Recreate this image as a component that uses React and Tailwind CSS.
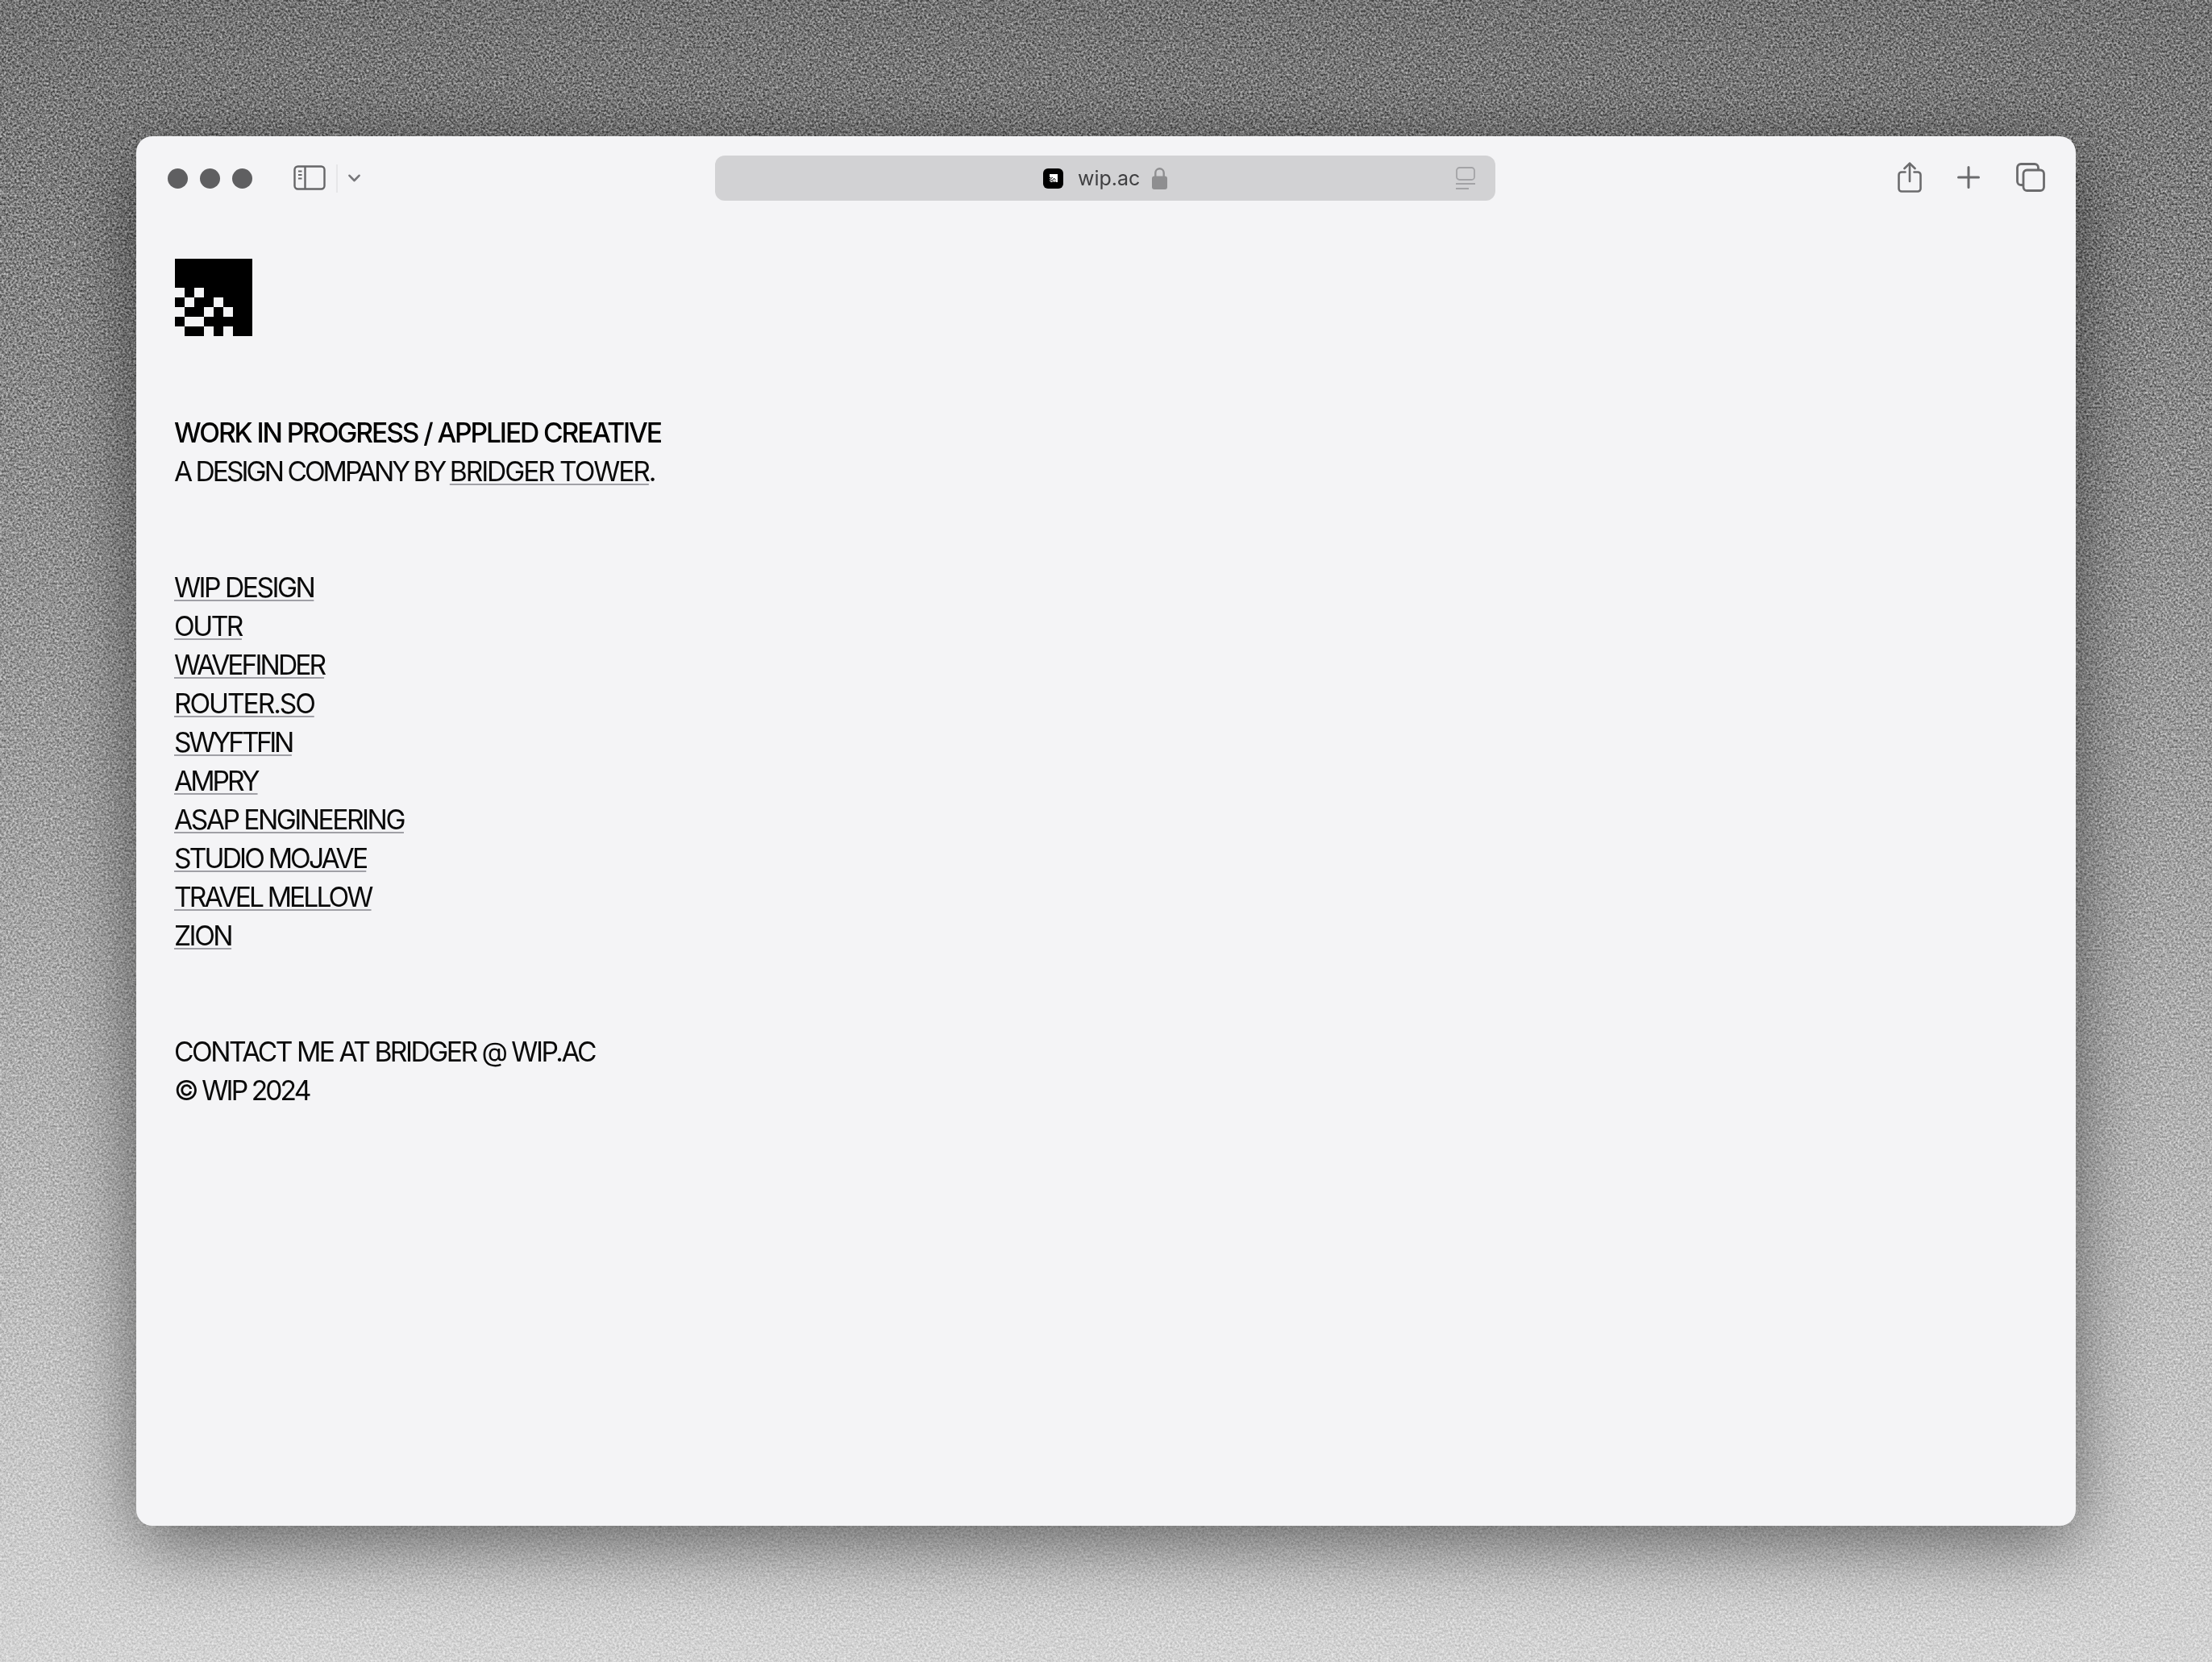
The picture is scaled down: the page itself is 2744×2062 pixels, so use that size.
const WHITE = [
  [0, 3], [2, 3],
  [1, 4], [4, 4],
  [0, 5], [3, 5], [5, 5],
  [1, 6], [2, 6],
  [0, 7], [3, 7], [5, 7],
];

function Logo({ size, bg, fg, crisp = true }) {
  return (
    <svg width={size} height={size} viewBox="0 0 8 8" shapeRendering={crisp ? "crispEdges" : "auto"} className="block shrink-0">
      <rect width="8" height="8" fill={bg} />
      {WHITE.map(([x, y]) => (
        <rect key={`${x}-${y}`} x={x} y={y} width="1" height="1" fill={fg} />
      ))}
    </svg>
  );
}

function Grain() {
  return (
    <svg className="absolute inset-0 w-full h-full mix-blend-overlay opacity-60" aria-hidden="true">
      <filter id="grain" x="0" y="0" width="100%" height="100%" colorInterpolationFilters="sRGB">
        <feTurbulence type="fractalNoise" baseFrequency="0.38" numOctaves="3" seed="7" stitchTiles="stitch" />
        <feColorMatrix type="matrix" values="1.5 0 0 0 -0.25  1.5 0 0 0 -0.25  1.5 0 0 0 -0.25  0 0 0 0 1" />
      </filter>
      <rect width="100%" height="100%" filter="url(#grain)" />
    </svg>
  );
}

function SidebarIcon() {
  return (
    <svg width="40" height="31" viewBox="0 0 40 31" fill="none" stroke="#666668" className="block">
      <rect x="1.5" y="1.5" width="37" height="28" rx="4" strokeWidth="2.4" />
      <path d="M14.5 1.5v28" strokeWidth="2.4" />
      <path d="M6 7.5h4.5M6 12h4.5M6 16.5h4.5" strokeWidth="1.8" />
    </svg>
  );
}

function Chevron() {
  return (
    <svg width="15" height="10" viewBox="0 0 15 10" fill="none" stroke="#77777a" strokeWidth="2.6" strokeLinecap="round" strokeLinejoin="round" className="block">
      <path d="M1.5 1.8 7.5 8l6-6.2" />
    </svg>
  );
}

function Lock() {
  return (
    <svg width="19" height="28" viewBox="0 0 19 28" className="block">
      <path d="M4.3 13V7.5a5.2 5.2 0 0 1 10.4 0V13" fill="none" stroke="#8e8e90" strokeWidth="2.4" />
      <rect x="0" y="11.5" width="19" height="16.5" rx="3" fill="#8e8e90" />
    </svg>
  );
}

function ReaderIcon() {
  return (
    <svg width="24" height="28" viewBox="0 0 24 28" fill="none" stroke="#a3a3a6" className="block">
      <rect x="1" y="1" width="22" height="15" rx="3.5" strokeWidth="1.8" />
      <path d="M0 21h24" strokeWidth="2" />
      <path d="M0 27h16" strokeWidth="2" />
    </svg>
  );
}

function ShareIcon() {
  return (
    <svg width="30" height="38" viewBox="0 0 30 38" fill="none" stroke="#6b6b6d" strokeWidth="2.6" strokeLinecap="round" strokeLinejoin="round" className="block">
      <path d="M9.5 12.5H5a3.5 3.5 0 0 0-3.5 3.5v17A3.5 3.5 0 0 0 5 36.500h20a3.500 3.500 0 0 0 3.500-3.500V16a3.500 3.500 0 0 0-3.500-3.500h-4.500" />
      <path d="M15 24V2" />
      <path d="M8.500 8 15 1.600 21.500 8" />
    </svg>
  );
}

function PlusIcon() {
  return (
    <svg width="28" height="28" viewBox="0 0 28 28" fill="none" stroke="#6b6b6d" strokeWidth="3" strokeLinecap="round" className="block">
      <path d="M14 1.500v25M1.500 14h25" />
    </svg>
  );
}

function TabsIcon() {
  return (
    <svg width="36" height="36" viewBox="0 0 36 36" fill="none" stroke="#6b6b6d" strokeWidth="2.800" strokeLinejoin="round" className="block">
      <path d="M8 27.500H6a4.500 4.500 0 0 1-4.500-4.500V6A4.500 4.500 0 0 1 6 1.500h17A4.500 4.500 0 0 1 27.500 6v2" />
      <rect x="9" y="9" width="25.500" height="25.500" rx="4.500" />
    </svg>
  );
}

function Link({ children, className = "" }) {
  return <a className={`underline decoration-2 decoration-[#a0a0a6] underline-offset-[3px] ${className}`}>{children}</a>;
}

const LINKS = [
  ["WIP DESIGN", ""],
  ["OUTR", ""],
  ["WAVEFINDER", "tracking-[-2.95px]"],
  ["ROUTER.SO", "tracking-[-2.1px]"],
  ["SWYFTFIN", "tracking-[-3.4px]"],
  ["AMPRY", "tracking-[-3px]"],
  ["ASAP ENGINEERING", ""],
  ["STUDIO MOJAVE", "tracking-[-2.85px]"],
  ["TRAVEL MELLOW", "tracking-[-2.9px]"],
  ["ZION", ""],
];

export default function App() {
  return (
    <div className="relative w-[2744px] h-[2062px] overflow-hidden bg-gradient-to-b from-[#747474] via-[#a0a0a0] to-[#d4d4d4] pt-[169px] pl-[169px]">
      <Grain />
      <div className="relative w-[2406px] h-[1724px] rounded-[20px] bg-[#f4f4f6] shadow-[0_24px_90px_rgba(0,0,0,0.5)] overflow-hidden">
        <div className="relative flex items-center h-[104px] pl-[39px] pr-[38px]">
          <div className="flex gap-[15px]">
            <div className="w-[25px] h-[25px] rounded-full bg-[#5f5f61]" />
            <div className="w-[25px] h-[25px] rounded-full bg-[#5f5f61]" />
            <div className="w-[25px] h-[25px] rounded-full bg-[#5f5f61]" />
          </div>
          <div className="ml-[51px] mb-[2px]"><SidebarIcon /></div>
          <div className="ml-[13px] w-[2px] h-[35px] bg-[#e6e6e8]" />
          <div className="ml-[13px]"><Chevron /></div>
          <div className="absolute left-[718px] top-[24px] w-[968px] h-[56px] rounded-[12px] bg-[#d2d2d4] flex items-center">
            <div className="ml-[407px] w-[25px] h-[25px] rounded-[6px] bg-black flex items-center justify-center">
              <Logo size={10} bg="#ffffff" fg="#000000" crisp={false} />
            </div>
            <span className="ml-[18px] pt-[1px] text-[25px] leading-none text-[#3f3f41] font-['Inter',sans-serif]">wip.ac</span>
            <div className="ml-[15px]"><Lock /></div>
            <div className="ml-auto mr-[25px]"><ReaderIcon /></div>
          </div>
          <div className="ml-auto mb-[3px] flex items-center">
            <ShareIcon />
            <div className="ml-[44px]"><PlusIcon /></div>
            <div className="ml-[45px]"><TabsIcon /></div>
          </div>
        </div>
        <div className="pl-[47px] pt-[48px] text-[33.6px] leading-[48px] tracking-[-2.5px] text-[#0a0a0a] font-['Inter',sans-serif]">
          <div className="ml-[1px]"><Logo size={96} bg="#000000" fg="#f4f4f6" /></div>
          <div className="mt-[96px]">
            <div className="font-[450] tracking-[-2.1px] text-black">WORK IN PROGRESS / APPLIED CREATIVE</div>
            <div><span className="tracking-[-3px]">A DESIGN COMPANY BY </span><Link className="tracking-[-2.1px]">BRIDGER TOWER</Link>.</div>
          </div>
          <div className="mt-[96px]">
            {LINKS.map(([l, t]) => (
              <div key={l}><Link className={t}>{l}</Link></div>
            ))}
          </div>
          <div className="mt-[96px]">
            <div>CONTACT ME AT BRIDGER @ WIP.AC</div>
            <div className="tracking-[-2.9px]">© WIP 2024</div>
          </div>
        </div>
      </div>
    </div>
  );
}
